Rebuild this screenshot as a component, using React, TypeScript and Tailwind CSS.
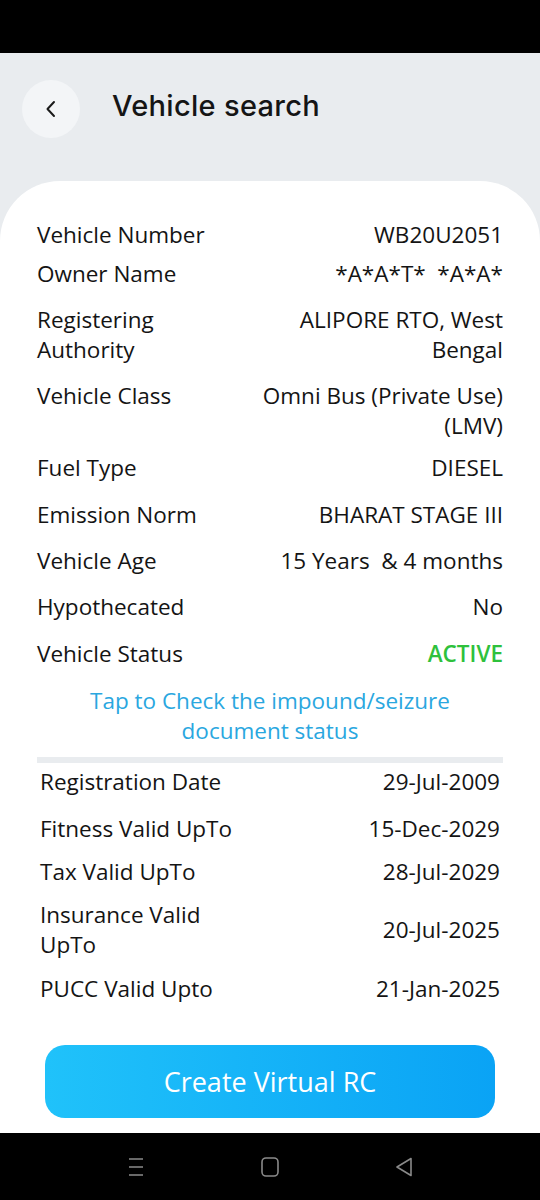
import React from "react";

type Row = { label: string; value: React.ReactNode; gap: string };

const ownerRows: Row[] = [
  { label: "Vehicle Number", value: "WB20U2051", gap: "mt-0" },
  { label: "Owner Name", value: "*A*A*T*  *A*A*", gap: "mt-[9px]" },
  { label: "Registering Authority", value: "ALIPORE RTO, West Bengal", gap: "mt-4" },
  { label: "Vehicle Class", value: "Omni Bus (Private Use) (LMV)", gap: "mt-4" },
  { label: "Fuel Type", value: "DIESEL", gap: "mt-3" },
  { label: "Emission Norm", value: "BHARAT STAGE III", gap: "mt-[17px]" },
  { label: "Vehicle Age", value: "15 Years  & 4 months", gap: "mt-4" },
  { label: "Hypothecated", value: "No", gap: "mt-4" },
  {
    label: "Vehicle Status",
    value: <span className="font-semibold text-[#2ec13c]">ACTIVE</span>,
    gap: "mt-[17px]",
  },
];

const validityRows: Row[] = [
  { label: "Registration Date", value: "29-Jul-2009", gap: "mt-0" },
  { label: "Fitness Valid UpTo", value: "15-Dec-2029", gap: "mt-[17px]" },
  { label: "Tax Valid UpTo", value: "28-Jul-2029", gap: "mt-[13px]" },
  { label: "Insurance Valid UpTo", value: "20-Jul-2025", gap: "mt-[13px]" },
  { label: "PUCC Valid Upto", value: "21-Jan-2025", gap: "mt-[14px]" },
];

function BackButton() {
  return (
    <button className="w-[58px] h-[58px] rounded-full bg-[#f3f5f7] flex items-center justify-center">
      <svg width="14" height="20" viewBox="0 0 14 20" fill="none">
        <path d="M10 3 L3.5 10 L10 17" stroke="#1a1a1a" strokeWidth="2" strokeLinecap="round" strokeLinejoin="round" />
      </svg>
    </button>
  );
}

export default function App() {
  return (
    <div className="w-[540px] h-[1200px] flex flex-col bg-[#e9ecef] overflow-hidden font-['Open_Sans',sans-serif] text-[#141414]">
      {/* status bar */}
      <div className="h-[53px] bg-black shrink-0" />

      {/* header */}
      <div className="flex items-start gap-[32px] pl-[22px] pt-[27px] h-[128px]">
        <BackButton />
        <h1 className="mt-[4px] text-[29px] font-medium tracking-[0.3px] font-['Inter',sans-serif] text-[#151515]">
          Vehicle search
        </h1>
      </div>

      {/* card */}
      <div className="flex-1 bg-white rounded-t-[60px] flex flex-col pt-[39px] text-[22.5px] leading-[30px]">
        <div className="flex flex-col px-[37px]">
          {ownerRows.map((row) => (
            <div key={row.label} className={`flex justify-between ${row.gap}`}>
              <span className="w-[200px] shrink-0">{row.label}</span>
              <span className="w-[262px] text-right whitespace-pre-wrap">{row.value}</span>
            </div>
          ))}

          <p className="mt-[17px] text-center text-[#2aa7df] px-6">
            Tap to Check the impound/seizure document status
          </p>

          <div className="mt-[11px] h-[6px] bg-[#e9ecef]" />
        </div>

        <div className="flex flex-col px-[40px] mt-1">
          {validityRows.map((row) => (
            <div key={row.label} className={`flex items-center justify-between ${row.gap}`}>
              <span className="w-[205px] shrink-0">{row.label}</span>
              <span className="text-right">{row.value}</span>
            </div>
          ))}
        </div>

        <div className="px-[45px] mt-[41px]">
          <button className="w-full h-[73px] rounded-[20px] bg-gradient-to-r from-[#20c2fa] to-[#0aa3f5] text-white text-[27px] flex items-center justify-center">
            Create Virtual RC
          </button>
        </div>
      </div>

      {/* navigation bar */}
      <div className="h-[67px] bg-black shrink-0 flex items-center justify-center gap-[114px]">
        <svg width="20" height="22" viewBox="0 0 20 22" fill="none">
          <path d="M3 3 H17 M3 11 H17 M3 19 H17" stroke="#8a8a8a" strokeWidth="1.6" />
        </svg>
        <svg width="20" height="22" viewBox="0 0 20 22" fill="none">
          <rect x="2" y="2" width="16" height="18" rx="4" stroke="#8a8a8a" strokeWidth="1.6" />
        </svg>
        <svg width="20" height="22" viewBox="0 0 20 22" fill="none">
          <path d="M17 2.5 L3 11 L17 19.5 Z" stroke="#8a8a8a" strokeWidth="1.6" strokeLinejoin="round" />
        </svg>
      </div>
    </div>
  );
}
